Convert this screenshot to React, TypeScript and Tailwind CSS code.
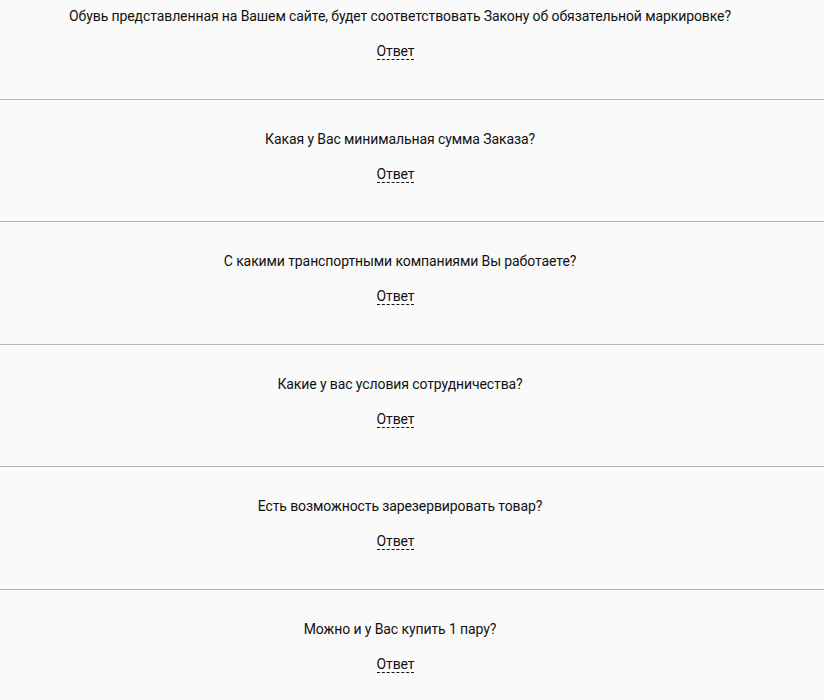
import React from "react";

const questions = [
  "Обувь представленная на Вашем сайте, будет соответствовать Закону об обязательной маркировке?",
  "Какая у Вас минимальная сумма Заказа?",
  "С какими транспортными компаниями Вы работаете?",
  "Какие у вас условия сотрудничества?",
  "Есть возможность зарезервировать товар?",
  "Можно и у Вас купить 1 пару?",
];

export default function App() {
  return (
    <div className="min-h-[700px] bg-[#fafafa] overflow-hidden text-[#111] text-[14px] tracking-[-0.1px]" style={{ fontFamily: "Roboto, 'Liberation Sans', sans-serif" }}>
      <div className="-mt-[23px]">
        {questions.map((q) => (
          <div key={q} className="border-b border-[#b4b4b4] pt-[29px] pb-[38.5px] pr-[24px] flex flex-col items-center text-center">
            <div className="leading-[20px]">{q}</div>
            <div className="mt-[16px] leading-[18px] mr-[9px]">
              <span className="border-b border-dashed border-[#111] cursor-pointer">Ответ</span>
            </div>
          </div>
        ))}
      </div>
    </div>
  );
}
